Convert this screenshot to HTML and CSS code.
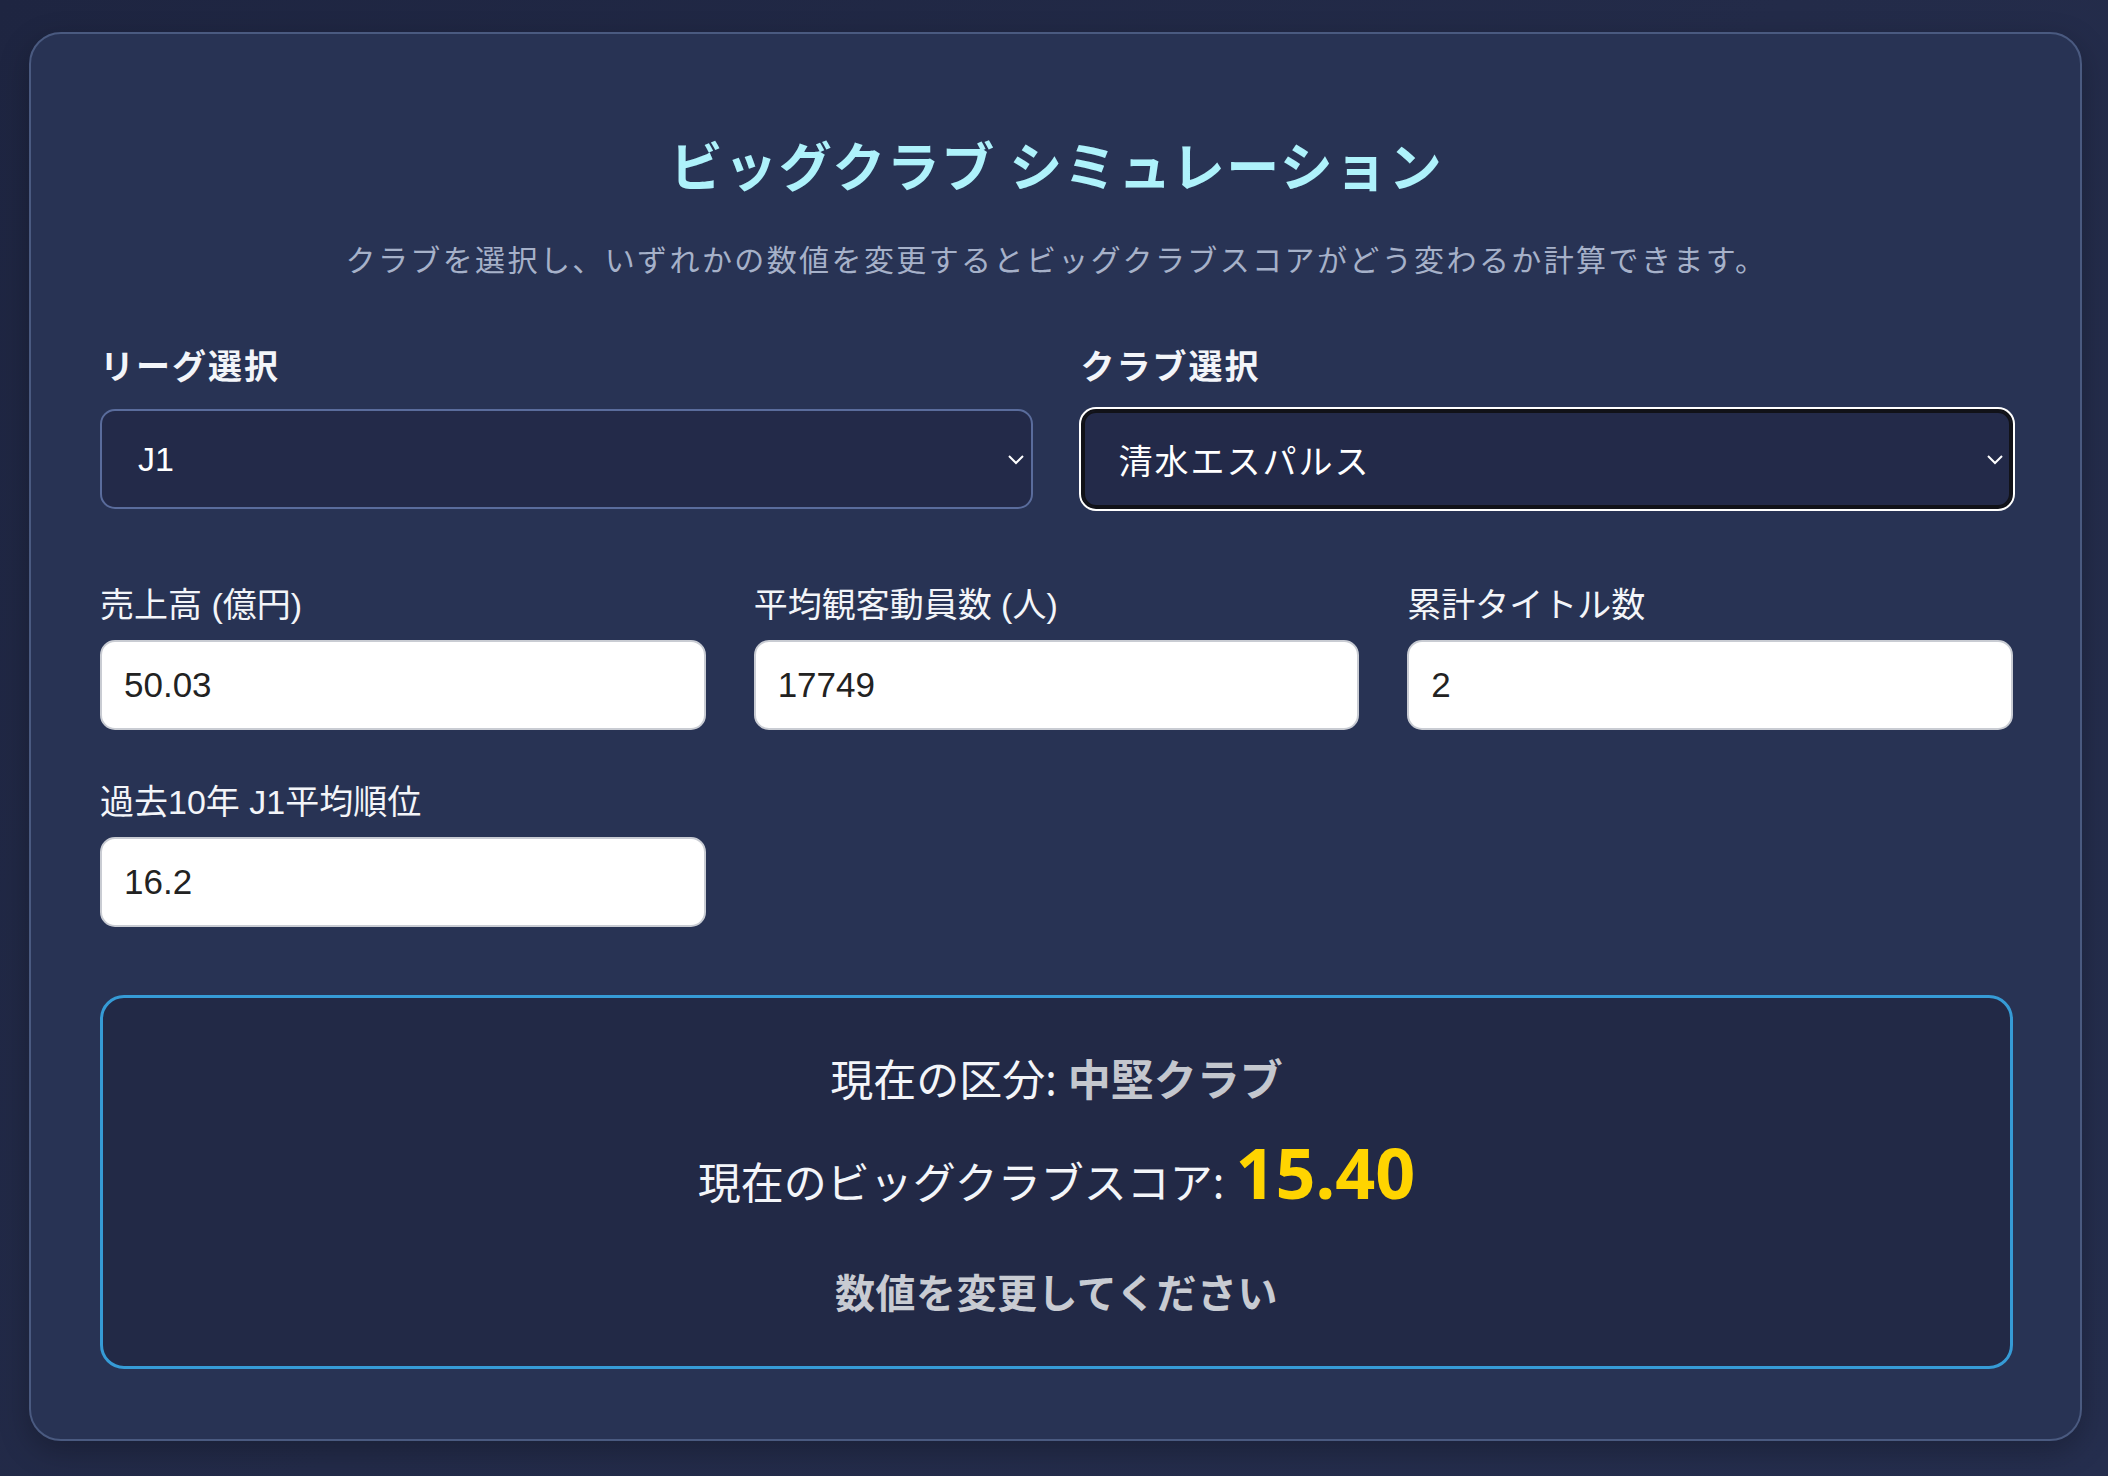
FILE: index.html
```html
<!DOCTYPE html>
<html lang="ja">
<head>
<meta charset="utf-8">
<title>ビッグクラブ シミュレーション</title>
<link rel="stylesheet" href="styles.css">
</head>
<body>
<main class="card">
  <h1 class="title">ビッグクラブ シミュレーション</h1>
  <p class="subtitle">クラブを選択し、いずれかの数値を変更するとビッグクラブスコアがどう変わるか計算できます。</p>

  <div class="select-row">
    <div class="select-group">
      <div class="select-label">リーグ選択</div>
      <div class="select">
        <span class="select-text">J1</span>
        <svg class="chev" width="20" height="12" viewBox="0 0 20 12"><polyline points="3,3 10,10 17,3" fill="none" stroke="#ffffff" stroke-width="2"/></svg>
      </div>
    </div>
    <div class="select-group">
      <div class="select-label">クラブ選択</div>
      <div class="select focused">
        <span class="select-text jp">清水エスパルス</span>
        <svg class="chev" width="20" height="12" viewBox="0 0 20 12"><polyline points="3,3 10,10 17,3" fill="none" stroke="#ffffff" stroke-width="2"/></svg>
      </div>
    </div>
  </div>

  <div class="fields">
    <div class="field">
      <div class="field-label">売上高 (億円)</div>
      <div class="input">50.03</div>
    </div>
    <div class="field">
      <div class="field-label">平均観客動員数 (人)</div>
      <div class="input">17749</div>
    </div>
    <div class="field">
      <div class="field-label">累計タイトル数</div>
      <div class="input">2</div>
    </div>
    <div class="field">
      <div class="field-label">過去10年 J1平均順位</div>
      <div class="input">16.2</div>
    </div>
  </div>

  <section class="result">
    <div class="result-line">現在の区分: <span class="category">中堅クラブ</span></div>
    <div class="result-line score-line">現在のビッグクラブスコア: <span class="score">15.40</span></div>
    <div class="result-note">数値を変更してください</div>
  </section>
</main>
</body>
</html>
```
FILE: styles.css
```css
html, body {
  margin: 0;
  padding: 0;
}
body {
  background: linear-gradient(135deg, #1e2541 0%, #232b49 50%, #252e4e 100%);
  min-height: 1476px;
  box-sizing: border-box;
  padding: 32px 26px 36px 29px;
  font-family: "Noto Sans", "Noto Sans CJK JP", sans-serif;
  color: #f3f5f9;
}
.card {
  box-sizing: border-box;
  width: 2053px;
  background: #283354;
  border: 2px solid #4a5a80;
  border-radius: 32px;
  padding: 96px 67px 70px 69px;
  box-shadow: 0 10px 30px rgba(0, 0, 0, 0.25);
}
.title {
  margin: 0;
  text-align: center;
  font-size: 53px;
  line-height: 68px;
  font-weight: 700;
  color: #aef2fb;
  font-family: "Noto Sans CJK JP", sans-serif;
  letter-spacing: 1.5px;
}
.subtitle {
  margin: 38px 0 0 0;
  text-align: center;
  font-size: 30px;
  line-height: 45px;
  letter-spacing: 2.4px;
  color: #a6b1c9;
  font-family: "Noto Sans CJK JP", sans-serif;
}
.select-row {
  margin-top: 62px;
  display: grid;
  grid-template-columns: 1fr 1fr;
  column-gap: 48px;
}
.select-group {
  display: flex;
  flex-direction: column;
  gap: 22px;
}
.select-label {
  font-family: "Noto Sans CJK JP", sans-serif;
  font-weight: 700;
  font-size: 34px;
  line-height: 44px;
  letter-spacing: 2px;
  color: #f3f5f9;
}
.select {
  box-sizing: border-box;
  height: 100px;
  display: flex;
  align-items: center;
  justify-content: space-between;
  background: #232a49;
  border: 2px solid #5a6c9c;
  border-radius: 15px;
  padding: 0 5px 0 36px;
}
.select-text {
  font-family: "Liberation Sans", "Noto Sans CJK JP", sans-serif;
  font-size: 34px;
  color: #ffffff;
}
.select-text.jp {
  letter-spacing: 2px;
}
.select.focused {
  border-color: #111218;
  box-shadow: inset 0 0 0 2px #111218, 0 0 0 2px #ffffff;
  padding-right: 6px;
}
.chev {
  display: block;
}
.fields {
  margin-top: 74px;
  display: grid;
  grid-template-columns: repeat(3, 1fr);
  column-gap: 48px;
  row-gap: 50px;
}
.field {
  display: flex;
  flex-direction: column;
  gap: 13px;
}
.field-label {
  font-family: "Liberation Sans", "Noto Sans CJK JP", sans-serif;
  font-size: 34px;
  line-height: 44px;
  color: #f3f5f9;
}
.input {
  box-sizing: border-box;
  height: 90px;
  background: #ffffff;
  border: 2px solid #c9ccd3;
  border-radius: 15px;
  padding: 0 22px;
  display: flex;
  align-items: center;
  font-family: "Liberation Sans", sans-serif;
  font-size: 35px;
  color: #222222;
}
.result {
  margin-top: 68px;
  box-sizing: border-box;
  height: 374px;
  background: #222946;
  border: 3px solid #369bd6;
  border-radius: 24px;
  padding: 50px 40px 0 40px;
  text-align: center;
}
.result-line {
  font-size: 43px;
  line-height: 63px;
  color: #f3f5f9;
  font-family: "Noto Sans", "Noto Sans CJK JP", sans-serif;
}
.category {
  font-weight: 700;
  color: #c4c7ce;
}
.score-line {
  margin-top: 17px;
  line-height: 88px;
}
.score {
  font-size: 70px;
  font-weight: 700;
  color: #ffd400;
}
.result-note {
  margin-top: 34px;
  font-size: 40px;
  line-height: 60px;
  font-weight: 700;
  letter-spacing: 0.5px;
  color: #c8cbd2;
  font-family: "Noto Sans CJK JP", sans-serif;
}
```
